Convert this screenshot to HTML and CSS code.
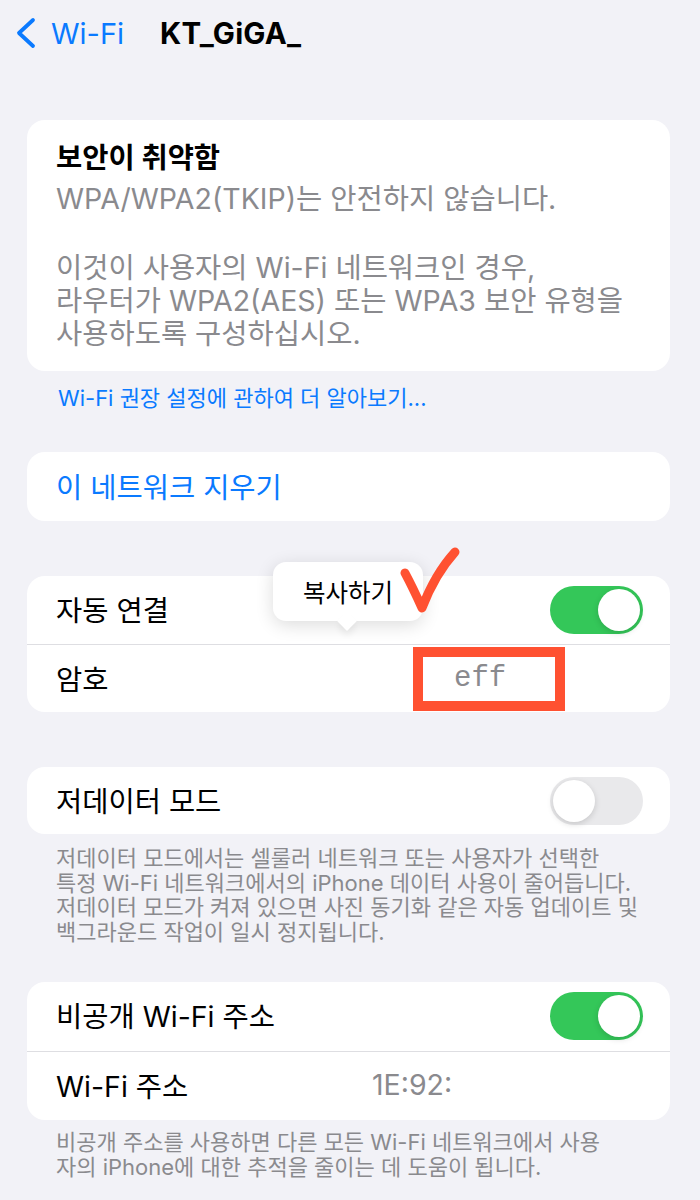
FILE: index.html
```html
<!DOCTYPE html>
<html lang="ko">
<head>
  <meta charset="UTF-8">
  <meta name="viewport" content="width=device-width, initial-scale=1.0">
  <title>KT_GiGA_</title>
  <link rel="stylesheet" href="styles.css">
</head>
<body>
  <div class="screen">
    <header class="nav">
      <a class="back">
        <svg width="24" height="32" viewBox="0 0 24 32"><path d="M20 3 L6 16 L20 29" fill="none" stroke="#0a7aff" stroke-width="3.8" stroke-linecap="round" stroke-linejoin="round"/></svg>
        <span>Wi-Fi</span>
      </a>
      <h1>KT_GiGA_</h1>
    </header>

    <section class="card warning">
      <h2>보안이 취약함</h2>
      <p>WPA/WPA2(TKIP)는 안전하지 않습니다.</p>
      <p>이것이 사용자의 Wi-Fi 네트워크인 경우,<br>라우터가 WPA2(AES) 또는 WPA3 보안 유형을<br>사용하도록 구성하십시오.</p>
    </section>
    <a class="learn">Wi-Fi 권장 설정에 관하여 더 알아보기...</a>

    <div class="card forget">
      <div class="row action">이 네트워크 지우기</div>
    </div>

    <div class="card connect">
      <div class="row">
        <span class="label">자동 연결</span>
        <span class="toggle"><span class="knob"></span></span>
      </div>
      <div class="row">
        <span class="label">암호</span>
        <span class="password">eff</span>
      </div>
      <div class="popup">복사하기</div>
      <svg class="check" width="64" height="72" viewBox="0 0 64 72"><path d="M6 29 Q14 44 23 64 Q36 30 56 8" fill="none" stroke="#ff5131" stroke-width="9" stroke-linecap="round" stroke-linejoin="round"/></svg>
    </div>

    <div class="card lowdata">
      <div class="row">
        <span class="label">저데이터 모드</span>
        <span class="toggle off"><span class="knob"></span></span>
      </div>
    </div>
    <p class="note first">저데이터 모드에서는 셀룰러 네트워크 또는 사용자가 선택한<br>특정 Wi-Fi 네트워크에서의 iPhone 데이터 사용이 줄어듭니다.<br>저데이터 모드가 켜져 있으면 사진 동기화 같은 자동 업데이트 및<br>백그라운드 작업이 일시 정지됩니다.</p>

    <div class="card private">
      <div class="row tall">
        <span class="label">비공개 Wi-Fi 주소</span>
        <span class="toggle"><span class="knob"></span></span>
      </div>
      <div class="row tall">
        <span class="label fixed">Wi-Fi 주소</span>
        <span class="value">1E:92:</span>
      </div>
    </div>
    <p class="note last">비공개 주소를 사용하면 다른 모든 Wi-Fi 네트워크에서 사용<br>자의 iPhone에 대한 추적을 줄이는 데 도움이 됩니다.</p>
  </div>
</body>
</html>
```

FILE: styles.css
```css
:root {
  --bg: #f2f2f7;
  --card: #ffffff;
  --text: #000000;
  --muted: #8a8a8e;
  --blue: #0a7aff;
  --green: #34c759;
  --line: #dedee2;
  --mark: #ff5131;
}

body {
  margin: 0;
  background: var(--bg);
  font-family: Inter, "Noto Sans CJK KR", sans-serif;
  color: var(--text);
}

.screen {
  width: 643px;
  padding: 0 30px 40px 27px;
}

/* top navigation */
.nav {
  display: flex;
  align-items: center;
  height: 66px;
  margin-left: -14px;
  margin-bottom: 54px;
}

.back {
  display: flex;
  align-items: center;
  gap: 14px;
  color: var(--blue);
  font-size: 29px;
}

.nav h1 {
  margin: 0 0 0 36px;
  font-size: 29.5px;
  font-weight: 700;
  letter-spacing: 0.2px;
}

/* cards */
.card {
  background: var(--card);
  border-radius: 18px;
}

.warning {
  padding: 20px 29px 21px;
}

.warning h2 {
  margin: 0 0 6px;
  font-size: 28.5px;
  font-weight: 700;
  line-height: 36px;
}

.warning p {
  margin: 0;
  font-size: 28.5px;
  line-height: 33px;
  color: var(--muted);
}

.warning p + p {
  margin-top: 36px;
}

.learn {
  display: block;
  padding: 16px 0 0 31px;
  font-size: 22px;
  line-height: 22px;
  color: var(--blue);
}

.forget {
  margin-top: 43px;
}

.row {
  display: flex;
  align-items: center;
  height: 68px;
  padding: 0 27px 0 29px;
  font-size: 28.5px;
}

.row + .row {
  border-top: 1px solid var(--line);
  height: 67px;
}

.row.tall {
  height: 69px;
}

.row.tall + .row.tall {
  height: 68px;
}

.action {
  height: 69px;
  padding-bottom: 3px;
  box-sizing: border-box;
  color: var(--blue);
}

.label {
  flex: 1;
  padding-bottom: 3px;
}

.label.fixed {
  flex: 0 0 316px;
}

.value {
  padding-bottom: 3px;
  color: var(--muted);
}

/* switches */
.toggle {
  display: flex;
  justify-content: flex-end;
  width: 93px;
  height: 48px;
  padding: 3px;
  box-sizing: border-box;
  border-radius: 24px;
  background: var(--green);
}

.toggle.off {
  justify-content: flex-start;
  background: #e9e9eb;
}

.knob {
  width: 42px;
  height: 42px;
  border-radius: 50%;
  background: #fff;
  box-shadow: 0 2px 6px rgba(0, 0, 0, 0.15);
}

/* auto join + password card */
.connect {
  position: relative;
  margin-top: 55px;
}

.password {
  box-sizing: border-box;
  width: 152px;
  height: 64px;
  margin-right: 78px;
  padding-left: 31px;
  border: 10px solid var(--mark);
  display: flex;
  align-items: center;
  font-family: "Liberation Mono", monospace;
  font-size: 29px;
  color: var(--muted);
}

.popup {
  position: absolute;
  left: 246px;
  top: -14px;
  width: 150px;
  height: 59px;
  display: flex;
  align-items: center;
  justify-content: center;
  background: #fff;
  border-radius: 13px;
  box-shadow: 0 4px 18px rgba(0, 0, 0, 0.14);
  font-size: 24.5px;
}

.popup::after {
  content: "";
  position: absolute;
  left: 67px;
  bottom: -7px;
  width: 14px;
  height: 14px;
  background: #fff;
  transform: rotate(45deg);
  box-shadow: 4px 4px 6px rgba(0, 0, 0, 0.06);
}

.check {
  position: absolute;
  left: 372px;
  top: -32px;
}

.lowdata {
  margin-top: 55px;
}

.lowdata .row {
  height: 67px;
}

.note {
  margin: 0;
  padding: 12px 29px 0;
  font-size: 22px;
  line-height: 24.7px;
  color: var(--muted);
}

.note.last {
  padding-top: 10px;
}

.private {
  margin-top: 37px;
}
```
